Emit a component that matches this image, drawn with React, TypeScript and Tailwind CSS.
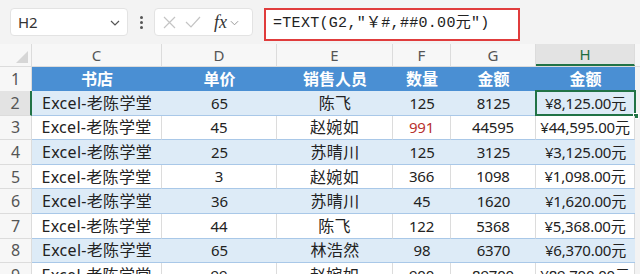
import React from 'react';

const COLS = [
  { key: 'C', w: 'w-[130px]' },
  { key: 'D', w: 'w-[115px]' },
  { key: 'E', w: 'w-[116px]' },
  { key: 'F', w: 'w-[58px]' },
  { key: 'G', w: 'w-[85px]' },
  { key: 'H', w: 'w-[99px]' },
];

const HEAD = ['书店', '单价', '销售人员', '数量', '金额', '金额'];

const ROWS = [
  ['Excel-老陈学堂', '65', '陈飞', '125', '8125', '¥8,125.00元'],
  ['Excel-老陈学堂', '45', '赵婉如', '991', '44595', '¥44,595.00元'],
  ['Excel-老陈学堂', '25', '苏晴川', '125', '3125', '¥3,125.00元'],
  ['Excel-老陈学堂', '3', '赵婉如', '366', '1098', '¥1,098.00元'],
  ['Excel-老陈学堂', '36', '苏晴川', '45', '1620', '¥1,620.00元'],
  ['Excel-老陈学堂', '44', '陈飞', '122', '5368', '¥5,368.00元'],
  ['Excel-老陈学堂', '65', '林浩然', '98', '6370', '¥6,370.00元'],
  ['Excel-老陈学堂', '99', '赵婉如', '900', '89700', '¥89,700.00元'],
];

const font = "font-['Microsoft_YaHei','Noto_Sans','Noto_Sans_CJK_SC',sans-serif]";

const App: React.FC = () => {
  return (
    <div className={`w-[640px] h-[274px] overflow-hidden bg-white ${font}`}>
      {/* formula bar */}
      <div className="h-[44px] bg-[#f3f3f3] flex items-start pt-[8px] pl-[10px]">
        <div className="w-[118px] h-[28px] bg-white rounded-[4px] border border-[#e3e3e3] flex items-center justify-between px-[7px]">
          <span className="text-[15px] text-[#333]">H2</span>
          <svg width="10" height="6" viewBox="0 0 10 6" className="mt-[2px]">
            <path d="M1 1l4 4 4-4" stroke="#555" strokeWidth="1.2" fill="none" />
          </svg>
        </div>
        <div className="w-[26px] h-[28px] flex flex-col items-center justify-center gap-[2px]">
          <span className="w-[3px] h-[3px] bg-[#555] rounded-full" />
          <span className="w-[3px] h-[3px] bg-[#555] rounded-full" />
          <span className="w-[3px] h-[3px] bg-[#555] rounded-full" />
        </div>
        <div className="w-[99px] h-[28px] bg-white rounded-[4px] border border-[#e3e3e3] flex items-center pl-[8px] gap-[9px]">
          <svg width="13" height="13" viewBox="0 0 13 13">
            <path d="M1 1l11 11M12 1L1 12" stroke="#c4c4c4" strokeWidth="1.2" />
          </svg>
          <svg width="16" height="12" viewBox="0 0 16 12">
            <path d="M1 6l5 5L15 1" stroke="#c4c4c4" strokeWidth="1.2" fill="none" />
          </svg>
          <span className="ml-[4px] text-[18px] italic text-[#333] font-['Liberation_Serif',serif] leading-none">fx</span>
          <svg width="9" height="6" viewBox="0 0 10 6" className="-ml-[6px] mt-[2px]">
            <path d="M1 1l4 4 4-4" stroke="#999" strokeWidth="1.1" fill="none" />
          </svg>
        </div>
        <div className="ml-[11px] w-[256px] h-[33px] border-2 border-[#e03c3c] bg-white flex items-center pl-[7px]">
          <span className="text-[15px] tracking-[0.3px] text-[#222] font-['Liberation_Mono','Noto_Sans_CJK_SC',monospace] whitespace-nowrap">
            =TEXT(G2,"￥#,##0.00元")
          </span>
        </div>
      </div>

      {/* column letters */}
      <div className="flex h-[23px] bg-[#f7f7f7] border-b border-[#dcdcdc]">
        <div className="w-[32px] relative border-r border-[#dcdcdc]">
          <svg width="12" height="12" viewBox="0 0 12 12" className="absolute right-[3px] bottom-[3px]">
            <path d="M12 0L12 12L0 12Z" fill="#d6d6d6" />
          </svg>
        </div>
        {COLS.map((c) => (
          <div
            key={c.key}
            className={`${c.w} flex items-center justify-center text-[15px] border-r border-[#dcdcdc] ${
              c.key === 'H' ? 'bg-[#e3e3e3] text-[#1e6e42] border-b-2 border-b-[#217346]' : 'text-[#555]'
            }`}
          >
            {c.key}
          </div>
        ))}
        <div className="flex-1" />
      </div>

      {/* header row 1 */}
      <div className="flex h-[24px]">
        <div className="w-[32px] bg-[#f7f7f7] border-r border-[#dcdcdc] flex items-center justify-center text-[16px] text-[#555]">1</div>
        {HEAD.map((h, i) => (
          <div
            key={i}
            className={`${COLS[i].w} bg-[#4a8fd3] flex items-center justify-center text-[16px] font-bold text-white`}
          >
            {h}
          </div>
        ))}
        <div className="flex-1 bg-[#f3f3f3]" />
      </div>

      {ROWS.map((r, ri) => {
        const rowNo = ri + 2;
        const blue = ri % 2 === 0;
        return (
          <div key={ri} className="flex h-[24.6px]">
            <div
              className={`w-[32px] flex items-center justify-center text-[16px] text-[#555] border-b border-[#dcdcdc] ${
                rowNo === 2 ? 'bg-[#e3e3e3] border-r-2 border-r-[#217346]' : 'bg-[#f7f7f7] border-r border-[#dcdcdc]'
              }`}
            >
              {rowNo}
            </div>
            {r.map((v, ci) => {
              const sel = rowNo === 2 && ci === 5;
              const cjk = ci === 0 || ci === 2;
              return (
                <div
                  key={ci}
                  className={`${COLS[ci].w} relative flex items-center justify-center whitespace-nowrap ${
                    cjk ? 'text-[16px] tracking-[0.3px]' : 'text-[15px] tracking-[-0.2px]'
                  } ${
                    blue ? 'bg-[#ddebf7] border-b border-[#a9c8e8]' : 'bg-white border-b border-r border-b-[#a9c8e8] border-r-[#dcdcdc]'
                  } ${rowNo === 3 && ci === 3 ? 'text-[#b8322f]' : 'text-[#222]'}`}
                >
                  {v}
                  {sel && (
                    <>
                      <div className="absolute inset-[-1px] border-2 border-[#217346]" />
                      <div className="absolute right-[-4px] bottom-[-4px] w-[6px] h-[6px] bg-[#217346] border border-white" />
                    </>
                  )}
                </div>
              );
            })}
            <div className="flex-1 bg-[#f3f3f3]" />
          </div>
        );
      })}
    </div>
  );
};

export default App;
